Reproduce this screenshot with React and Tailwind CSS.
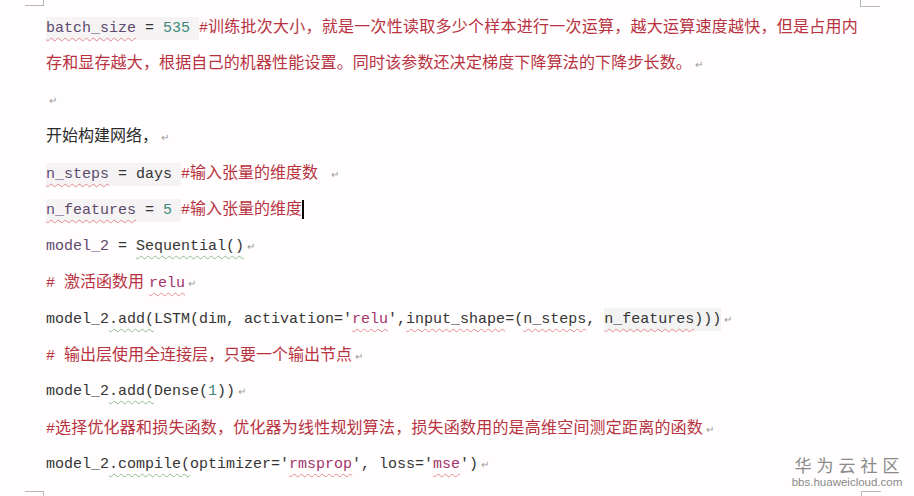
import React from 'react';

const mono = "font-['Liberation_Mono',monospace] text-[15px]";
const cjk = "font-['Noto_Sans_CJK_SC','Noto_Sans',sans-serif] text-[16px]";
const sp = '\u00a0';

// spell check squiggles like in Word
const redWave = 'underline decoration-wavy decoration-[#e58a92] decoration-1 underline-offset-[5px]';
const greenWave = 'underline decoration-wavy decoration-[#8cc08c] decoration-1 underline-offset-[5px]';

const Mark = () => <span className="ml-[3px] text-[10px] text-[#9a9a9a]">↵</span>;

const Line = ({ children }) => (
    <div className="h-[36.45px] leading-[36.45px] whitespace-nowrap text-[#353535]">{children}</div>
);

const Code = ({ children, className = '' }) => <span className={`${mono} ${className}`}>{children}</span>;
const Cn = ({ children, className = '' }) => <span className={`${cjk} ${className}`}>{children}</span>;

const Corner = ({ className }) => <div className={`absolute border-[#b8b8b8] ${className}`} />;

export default function App() {
    return (
        <div className="relative w-[914px] h-[496px] overflow-hidden bg-[#fffdfd]">
            <div className="pl-[46px] pt-[7px]">
                <Line>
                    <Code className="bg-[#f5f3f3] py-[3px]">
                        <span className={`text-[#5e4a6e] ${redWave}`}>batch_size</span>{sp}={sp}<span className="text-[#3d8a7a]">535</span>{sp}
                    </Code>
                    <Code className="text-[#b8323f]">#</Code>
                    <Cn className="text-[#b8323f] tracking-[0.25px]">训练批次大小，就是一次性读取多少个样本进行一次运算，越大运算速度越快，但是占用内</Cn>
                </Line>
                <Line>
                    <Cn className="text-[#b8323f] tracking-[0.15px]">存和显存越大，根据自己的机器性能设置。同时该参数还决定梯度下降算法的下降步长数。</Cn>
                    <Mark />
                </Line>
                <Line>
                    <Mark />
                </Line>
                <Line>
                    <Cn className="text-[#2a2a2a] text-[15px]">开始构建网络，</Cn>
                    <Mark />
                </Line>
                <Line>
                    <Code className="bg-[#f5f3f3] py-[3px]">
                        <span className={`text-[#5e4a6e] ${redWave}`}>n_steps</span>{sp}={sp}days{sp}
                    </Code>
                    <Code className="text-[#b8323f]">#</Code>
                    <Cn className="text-[#b8323f]">输入张量的维度数</Cn>
                    <span className="ml-[10px]"><Mark /></span>
                </Line>
                <Line>
                    <Code className="bg-[#f5f3f3] py-[3px]">
                        <span className={`text-[#5e4a6e] ${redWave}`}>n_features</span>{sp}={sp}<span className="text-[#3d8a7a]">5</span>{sp}
                    </Code>
                    <Code className="text-[#b8323f]">#</Code>
                    <Cn className="text-[#b8323f]">输入张量的维度</Cn>
                    <span className="inline-block w-[2px] h-[19px] bg-black align-middle" />
                </Line>
                <Line>
                    <Code>
                        <span className="text-[#5e4a6e]">model_2</span> = <span className={greenWave}>Sequential()</span>
                    </Code>
                    <Mark />
                </Line>
                <Line>
                    <Code className="text-[#b8323f]">#{sp}</Code>
                    <Cn className="text-[#b8323f]">激活函数用</Cn>
                    <Code className={`ml-[5px] text-[#a2356c] ${redWave}`}>relu</Code>
                    <Mark />
                </Line>
                <Line>
                    <Code>
                        model_2<span className={greenWave}>.add(</span>LSTM(dim, activation='<span className={`text-[#a2356c] ${redWave}`}>relu</span>',<span className={redWave}>input_shape</span>=(<span className={redWave}>n_steps</span>,{' '}
                        <span className="bg-[#f3f3f3] py-[3px]"><span className={redWave}>n_features</span>)))</span>
                    </Code>
                    <Mark />
                </Line>
                <Line>
                    <Code className="text-[#b8323f]">#{sp}</Code>
                    <Cn className="text-[#b8323f]">输出层使用全连接层，只要一个输出节点</Cn>
                    <Mark />
                </Line>
                <Line>
                    <Code>
                        model_2<span className={greenWave}>.add(</span>Dense(<span className="text-[#3d8a7a]">1</span>))
                    </Code>
                    <Mark />
                </Line>
                <Line>
                    <Code className="text-[#b8323f]">#</Code>
                    <Cn className="text-[#b8323f] tracking-[0.2px]">选择优化器和损失函数，优化器为线性规划算法，损失函数用的是高维空间测定距离的函数</Cn>
                    <Mark />
                </Line>
                <Line>
                    <Code>
                        model_2<span className={greenWave}>.compile(</span>optimizer='<span className={`text-[#a2356c] ${redWave}`}>rmsprop</span>', loss='<span className={`text-[#a2356c] ${redWave}`}>mse</span>')
                    </Code>
                    <Mark />
                </Line>
            </div>

            {/* page corner marks */}
            <Corner className="left-[25px] top-0 w-[19px] h-[6px] border-r border-b" />
            <Corner className="left-[25px] top-[491px] w-[19px] h-[6px] border-r border-t" />
            <Corner className="left-[860px] top-0 w-[20px] h-[7px] border-l border-b" />
            <Corner className="left-[861px] top-[491px] w-[20px] h-[6px] border-l border-t" />

            {/* watermark */}
            <div className="absolute left-[792px] top-[455px] w-[110px] flex flex-col items-center whitespace-nowrap text-[#8a8a8a] font-['Noto_Sans_CJK_SC',sans-serif]">
                <span className="text-[17px] leading-[20px] tracking-[5px] pl-[5px]">华为云社区</span>
                <span className="text-[11.5px] leading-[14px] font-['Liberation_Sans',sans-serif]">bbs.huaweicloud.com</span>
            </div>
        </div>
    );
}
